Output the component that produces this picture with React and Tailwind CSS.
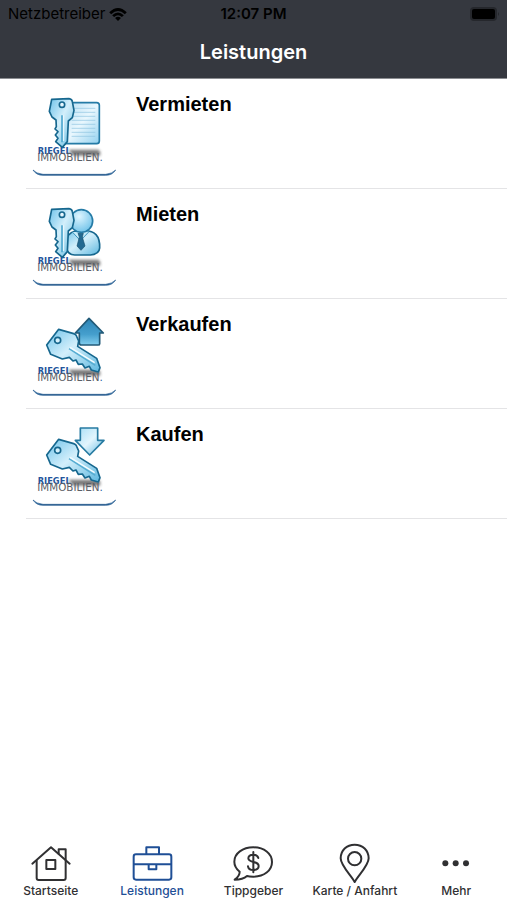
const services = [
  { id: "vermieten", title: "Vermieten", Art: RentOutArt },
  { id: "mieten", title: "Mieten", Art: RentArt },
  { id: "verkaufen", title: "Verkaufen", Art: SellArt },
  { id: "kaufen", title: "Kaufen", Art: BuyArt },
];

const tabs = [
  { id: "start", label: "Startseite", Icon: HomeIcon },
  { id: "services", label: "Leistungen", Icon: BriefcaseIcon },
  { id: "tips", label: "Tippgeber", Icon: DollarBubbleIcon },
  { id: "map", label: "Karte / Anfahrt", Icon: PinIcon },
  { id: "more", label: "Mehr", Icon: MoreIcon },
];

// shared gradients, referenced by all service drawings
function Gradients() {
  return (
    <svg className="absolute h-0 w-0" aria-hidden="true">
      <defs>
        <linearGradient id="key" x1="0" y1="0" x2="1" y2="1">
          <stop offset="0" stopColor="#6fc3ea" />
          <stop offset="0.45" stopColor="#d3effb" />
          <stop offset="1" stopColor="#5db7df" />
        </linearGradient>
        <linearGradient id="paper" x1="0" y1="0" x2="1" y2="1">
          <stop offset="0" stopColor="#b5def4" />
          <stop offset="0.5" stopColor="#e9f7fe" />
          <stop offset="1" stopColor="#93d1ef" />
        </linearGradient>
        <linearGradient id="up" x1="0" y1="0" x2="0" y2="1">
          <stop offset="0" stopColor="#2c83b5" />
          <stop offset="0.6" stopColor="#459fcd" />
          <stop offset="1" stopColor="#82cdee" />
        </linearGradient>
        <linearGradient id="down" x1="0" y1="0" x2="1" y2="1">
          <stop offset="0" stopColor="#a5def6" />
          <stop offset="0.5" stopColor="#e2f5fd" />
          <stop offset="1" stopColor="#62b9e1" />
        </linearGradient>
        <radialGradient id="head" cx="0.4" cy="0.3" r="0.8">
          <stop offset="0" stopColor="#def5ff" />
          <stop offset="1" stopColor="#66bee7" />
        </radialGradient>
        <linearGradient id="edge" x1="0" y1="0" x2="1" y2="0">
          <stop offset="0" stopColor="#3d83b3" />
          <stop offset="0.15" stopColor="#1f5285" />
          <stop offset="0.85" stopColor="#1f5285" />
          <stop offset="1" stopColor="#3d83b3" />
        </linearGradient>
        <filter id="soft" x="-20%" y="-60%" width="140%" height="220%">
          <feGaussianBlur stdDeviation="5" />
        </filter>
      </defs>
    </svg>
  );
}

function ServiceArt({ children }) {
  return (
    <svg viewBox="27 15 270 270" className="h-[90px] w-[90px] shrink-0" aria-hidden="true">
      <path d="M145 194h90q10 8 4 18h-80z" fill="#333" opacity="0.65" filter="url(#soft)" />
      <text className="fill-[#5b5e66] font-['DejaVu_Sans']">
        <tspan x="53" y="207" fontSize="25" className="fill-[#24559c] font-bold">
          RIEGEL
        </tspan>
        <tspan x="52" y="227" fontSize="31">
          IMMOBILIEN
        </tspan>
        <tspan fontSize="31" className="fill-[#24559c]">.</tspan>
      </text>
      {children}
      <path
        d="M39 255Q49 266 69 268H257Q277 266 287 255Q277 271 257 271H69Q49 271 39 255Z"
        fill="url(#edge)"
        stroke="#245b90"
        strokeWidth="2"
      />
    </svg>
  );
}

function UprightKey() {
  return (
    <g stroke="#16678e" strokeWidth="5" strokeLinejoin="round">
      <path
        d="M95 43L147 41Q156 42 157 50L162 76L157 98L145 108L142 170L127 187L107 170L114 160L106 150L114 140L105 132L109 125L108 105L96 96L88 79Z"
        fill="url(#key)"
      />
      <path d="M126 91V172" stroke="#52a9cf" strokeWidth="5" />
      <path d="M131 91V168" stroke="#f1fbff" strokeWidth="3" />
      <circle cx="126" cy="59" r="8" fill="#e9f8ff" />
    </g>
  );
}

function SlantedKey() {
  return (
    <g stroke="#16678e" strokeWidth="5" strokeLinejoin="round">
      <path
        d="M116 73L161 86Q168 88 170 94L176 108L173 124L230 160L240 188L235 201L214 195L208 184L195 189L187 177L175 178L168 165L159 168L148 157L127 162L92 148L80 120Z"
        fill="url(#key)"
      />
      <path d="M147 131L226 181" stroke="#57add2" strokeWidth="5" />
      <path d="M150 127L224 173" stroke="#f4fcff" strokeWidth="4" />
      <circle cx="113" cy="106" r="9" fill="#d3effb" />
    </g>
  );
}

function RentOutArt() {
  return (
    <ServiceArt>
      <rect x="132" y="53" width="106" height="123" rx="8" fill="url(#paper)" stroke="#257ba6" strokeWidth="5" />
      <path
        d="M155 70H226M155 82H226M155 94H226M155 106H226M155 118H226M155 130H226M155 142H226M155 154H226"
        stroke="#8dc3df"
        strokeWidth="2"
      />
      <UprightKey />
    </ServiceArt>
  );
}

function RentArt() {
  return (
    <ServiceArt>
      <path
        d="M139 158Q135 125 154 113Q165 106 186 108Q213 104 228 119Q240 132 239 159Q238 178 211 180H164Q143 180 139 158Z"
        fill="url(#key)"
        stroke="#16678e"
        strokeWidth="5"
      />
      <path d="M157 111L181 137L207 110" fill="#c8ecfa" stroke="#3c94bd" strokeWidth="3" />
      <path d="M174 115H190L187 126L195 153L183 166L171 153L178 126Z" fill="#236991" stroke="#15506f" strokeWidth="2" />
      <circle cx="184" cy="78" r="34" fill="url(#head)" stroke="#257ba6" strokeWidth="5" />
      <UprightKey />
    </ServiceArt>
  );
}

function SellArt() {
  return (
    <ServiceArt>
      <path
        d="M207 40L250 84H239V116Q239 120 234 120H184Q178 120 178 114V84H166Z"
        fill="url(#up)"
        stroke="#225a78"
        strokeWidth="5"
        strokeLinejoin="round"
      />
      <SlantedKey />
    </ServiceArt>
  );
}

function BuyArt() {
  return (
    <ServiceArt>
      <path
        d="M181 39H233V76H252L209 120L166 76H181Z"
        fill="url(#down)"
        stroke="#277ba2"
        strokeWidth="5"
        strokeLinejoin="round"
      />
      <SlantedKey />
    </ServiceArt>
  );
}

function TabSvg({ viewBox, children }) {
  return (
    <svg
      viewBox={viewBox}
      className="h-10 w-10 overflow-visible"
      fill="none"
      stroke="currentColor"
      strokeWidth="6"
      strokeLinecap="round"
      strokeLinejoin="round"
      aria-hidden="true"
    >
      {children}
    </svg>
  );
}

function HomeIcon() {
  return (
    <TabSvg viewBox="93 24 120 120">
      <path d="M97 86L153 37L209 86" />
      <path d="M110 77V129Q110 135 116 135H191Q197 135 197 129V43H176V56" />
      <rect x="139" y="75" width="27" height="27" />
    </TabSvg>
  );
}

function BriefcaseIcon() {
  return (
    <TabSvg viewBox="396 24 120 120">
      <rect x="401" y="58" width="113" height="76" rx="7" />
      <path d="M439 57V37H477V57M402 88H513M446 90V103H469V90" />
    </TabSvg>
  );
}

function DollarBubbleIcon() {
  return (
    <TabSvg viewBox="700 24 120 120">
      <path d="M720 110C709 101 704 92 704 80C704 55 729 37 761 37C793 37 817 55 817 81C817 107 793 125 761 125C754 125 748 125 742 123C733 131 720 134 705 134C715 127 720 119 720 110Z" />
      <path d="M776 69C774 62 769 59 761 59C752 59 746 63 746 70C746 77 752 79 761 81C771 83 777 86 777 93C777 101 770 105 761 105C752 105 746 101 745 94M761 51V112" />
    </TabSvg>
  );
}

function PinIcon() {
  return (
    <TabSvg viewBox="243 24 120 120">
      <path d="M302 141C292 122 260 92 260 70C260 46 278 29 302 29C326 29 344 46 344 70C344 92 312 122 302 141Z" />
      <circle cx="302" cy="71" r="20" />
    </TabSvg>
  );
}

function MoreIcon() {
  return (
    <TabSvg viewBox="547 24 120 120">
      <g fill="currentColor" stroke="none">
        <circle cx="575" cy="85" r="9" />
        <circle cx="606" cy="85" r="9" />
        <circle cx="637" cy="85" r="9" />
      </g>
    </TabSvg>
  );
}

function StatusBar() {
  return (
    <div className="grid h-7 grid-cols-3 items-center pl-2 pr-2 text-[15px] text-black">
      <div className="flex items-center gap-1">
        <span>Netzbetreiber</span>
        <svg viewBox="0 0 54 40" className="h-[13px] w-[18px]" fill="currentColor" aria-hidden="true">
          <path d="M0 13Q27-13 54 13L48 19Q27 0 6 19Z" />
          <path d="M9 22Q27 5 45 22L39 28Q27 17 15 28Z" />
          <path d="M18 31Q27 23 36 31L27 40Z" />
        </svg>
      </div>
      <span className="text-center font-semibold">12:07 PM</span>
      <svg viewBox="0 0 30 14" className="h-[14px] w-[30px] justify-self-end" aria-hidden="true">
        <rect x="1" y="0" width="27" height="14" rx="4" fill="#25272c" />
        <rect x="3" y="2" width="23" height="10" rx="2" fill="#000" />
        <path d="M29 5Q31 7 29 9Z" fill="#25272c" />
      </svg>
    </div>
  );
}

export default function App() {
  return (
    <div className="flex min-h-screen flex-col bg-white font-[Inter,sans-serif]">
      <Gradients />

      <header className="h-[79px] border-b border-[#8b8d91] bg-[#35383f]">
        <StatusBar />
        <h1 className="pt-2.5 text-center text-xl leading-7 font-semibold text-white">Leistungen</h1>
      </header>

      <main className="flex-1">
        <ul className="pl-[26px]">
          {services.map(({ id, title, Art }) => (
            <li key={id} className="border-b border-[#e4e4e6]">
              <a href={`#${id}`} className="flex h-[109px] items-start gap-[17px] pt-[11px] pl-[3px]">
                <Art />
                <span className="font-['Liberation_Sans',sans-serif] text-xl leading-7 font-bold text-black">
                  {title}
                </span>
              </a>
            </li>
          ))}
        </ul>
      </main>

      <nav className="grid grid-cols-5 pb-px">
        {tabs.map(({ id, label, Icon }) => (
          <a
            key={id}
            href={`#${id}`}
            className={`flex flex-col items-center ${id === "services" ? "text-[#1f4f96]" : "text-[#303032]"}`}
          >
            <Icon />
            <span className="text-xs leading-4 font-medium whitespace-nowrap">{label}</span>
          </a>
        ))}
      </nav>
    </div>
  );
}
